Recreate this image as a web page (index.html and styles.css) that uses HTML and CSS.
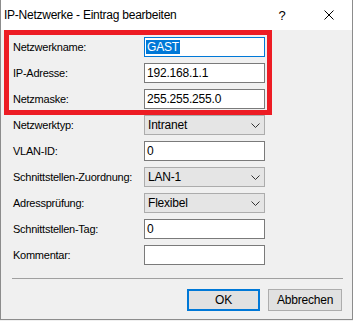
FILE: index.html
```html
<!doctype html>
<html lang="de">
  <head>
    <meta charset="UTF-8" />
    <title>IP-Netzwerke - Eintrag bearbeiten</title>
    <link rel="stylesheet" href="styles.css">
  </head>
  <body>
    <div class="dialog">
      <div class="titlebar">
        <span class="title">IP-Netzwerke - Eintrag bearbeiten</span>
        <span class="help">?</span>
        <span class="close">
          <svg viewBox="0 0 10 10" width="10" height="10">
            <path d="M0.5 0.5L9.5 9.5M9.5 0.5L0.5 9.5" stroke="#000" stroke-width="1" fill="none" />
          </svg>
        </span>
      </div>

      <div class="content">
        <!-- red annotation over the first three rows -->
        <div class="mark"></div>

        <div class="form">
          <label>Netzwerkname:</label>
          <div class="field focused"><span class="selected">GAST</span></div>

          <label>IP-Adresse:</label>
          <div class="field">192.168.1.1</div>

          <label>Netzmaske:</label>
          <div class="field">255.255.255.0</div>

          <label>Netzwerktyp:</label>
          <div class="select">
            <span>Intranet</span>
            <svg class="chevron" viewBox="0 0 9 5" width="9" height="5">
              <path d="M0.5 0.5L4.5 4.5L8.5 0.5" stroke="#333" stroke-width="1" fill="none" />
            </svg>
          </div>

          <label>VLAN-ID:</label>
          <div class="field">0</div>

          <label>Schnittstellen-Zuordnung:</label>
          <div class="select">
            <span>LAN-1</span>
            <svg class="chevron" viewBox="0 0 9 5" width="9" height="5">
              <path d="M0.5 0.5L4.5 4.5L8.5 0.5" stroke="#333" stroke-width="1" fill="none" />
            </svg>
          </div>

          <label>Adressprüfung:</label>
          <div class="select">
            <span>Flexibel</span>
            <svg class="chevron" viewBox="0 0 9 5" width="9" height="5">
              <path d="M0.5 0.5L4.5 4.5L8.5 0.5" stroke="#333" stroke-width="1" fill="none" />
            </svg>
          </div>

          <label>Schnittstellen-Tag:</label>
          <div class="field">0</div>

          <label>Kommentar:</label>
          <div class="field"></div>
        </div>

        <div class="separator"></div>

        <div class="buttons">
          <div class="btn btn-default">OK</div>
          <div class="btn">Abbrechen</div>
        </div>
      </div>
    </div>
  </body>
</html>
```

FILE: styles.css
```css
* {
  margin: 0;
  padding: 0;
  box-sizing: border-box;
}

body {
  background: #f0f0f0;
  font-family: "Liberation Sans", Arial, sans-serif;
  font-size: 11px;
  color: #000;
}

.dialog {
  width: 353px;
  height: 320px;
  background: #f0f0f0;
  border: 1px solid #8c8c8c;
  border-top: 0;
  display: flex;
  flex-direction: column;
}

.titlebar {
  height: 30px;
  background: #fff;
  display: flex;
  align-items: center;
  padding-left: 3px;
}

.title {
  font-size: 12px;
  letter-spacing: -0.25px;
  flex: 1;
}

.help {
  font-size: 13px;
  width: 46px;
  text-align: center;
  margin-right: 1px;
}

.close {
  width: 46px;
  height: 30px;
  display: flex;
  align-items: center;
  justify-content: center;
}

.content {
  position: relative;
  flex: 1;
}

.mark {
  position: absolute;
  left: 3px;
  top: 0;
  width: 268px;
  height: 85px;
  border: 5px solid #ed1c24;
  pointer-events: none;
}

.form {
  display: grid;
  grid-template-columns: 131px 121px;
  grid-auto-rows: 20px;
  row-gap: 6px;
  padding: 7px 0 0 12px;
}

.form label {
  display: flex;
  align-items: center;
  letter-spacing: -0.25px;
}

.field {
  background: #fff;
  border: 1px solid #7a7a7a;
  padding: 0 2px;
  display: flex;
  align-items: center;
  font-size: 12px;
  letter-spacing: -0.2px;
}

.field.focused {
  border-color: #0078d7;
  padding-left: 1px;
}

.selected {
  background: #0078d7;
  color: #fff;
  padding: 1px 1px;
  line-height: 12px;
}

.select {
  background: #e5e5e5;
  border: 1px solid #acacac;
  padding: 0 4px 0 3px;
  display: flex;
  align-items: center;
  justify-content: space-between;
  font-size: 12px;
  letter-spacing: -0.2px;
}

.chevron {
  display: block;
}

.separator {
  height: 1px;
  background: #a0a0a0;
  margin: 13px 9px 0 11px;
}

.buttons {
  display: flex;
  justify-content: flex-end;
  gap: 8px;
  padding: 10px 10px 0 0;
}

.btn {
  width: 74px;
  height: 22px;
  background: #e1e1e1;
  border: 1px solid #adadad;
  display: flex;
  align-items: center;
  justify-content: center;
  font-size: 12px;
  letter-spacing: -0.2px;
}

.btn-default {
  width: 73px;
  border: 2px solid #0078d7;
}
```
